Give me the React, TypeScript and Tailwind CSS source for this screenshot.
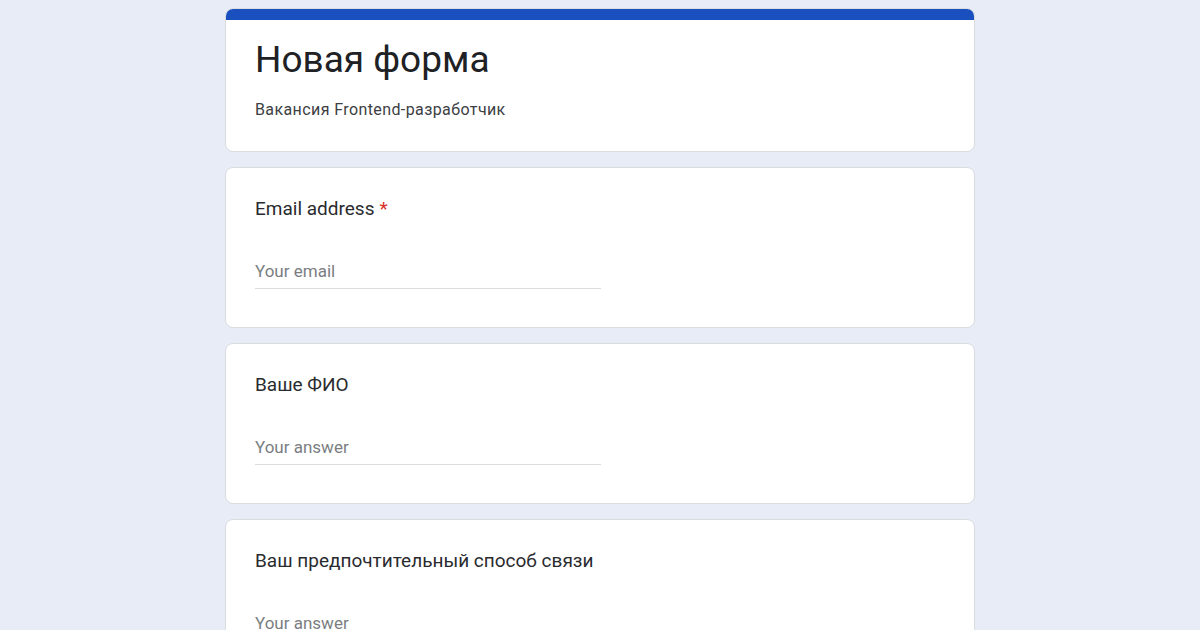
import React from "react";

const questions = [
  { id: 1, label: "Email address", required: true, placeholder: "Your email" },
  { id: 2, label: "Ваше ФИО", required: false, placeholder: "Your answer" },
  { id: 3, label: "Ваш предпочтительный способ связи", required: false, placeholder: "Your answer" },
];

export default function App() {
  return (
    <div className="min-h-screen bg-[#e7ecf7] font-['Roboto',sans-serif] text-[#202124]">
      <div className="mx-auto flex w-[750px] flex-col gap-[15px] pt-[8px]">
        <div className="overflow-hidden rounded-[8px] border border-[#dadce0] bg-white">
          <div className="h-[11px] bg-[#1a4fc0]" />
          <div className="px-[29px] pt-[18px] pb-[31px]">
            <h1 className="text-[37px] leading-[44px] font-normal">Новая форма</h1>
            <p className="mt-[18px] text-[16px] leading-[20px] tracking-[0.4px] text-[#3c4043]">Вакансия Frontend-разработчик</p>
          </div>
        </div>
        {questions.map((q) => (
          <div key={q.id} className="rounded-[8px] border border-[#dadce0] bg-white px-[29px] pt-[29px] pb-[38px]">
            <div className="text-[19px] leading-[24px] text-[#2a2b2e]">
              {q.label}
              {q.required && <span className="ml-[5px] text-[#d93025]">*</span>}
            </div>
            <div className="mt-[40px] w-[346px] border-b border-[#dadce0] pb-[7px] text-[17px] leading-[20px] text-[#7a7e83]">
              {q.placeholder}
            </div>
          </div>
        ))}
      </div>
    </div>
  );
}
